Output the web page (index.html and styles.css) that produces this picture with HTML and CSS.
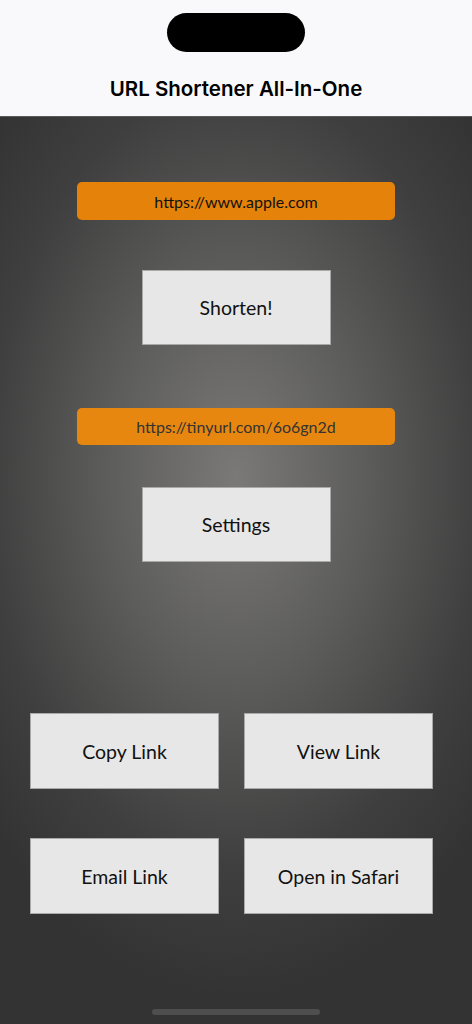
FILE: index.html
```html
<!DOCTYPE html>
<html>
<head>
<meta charset="utf-8">
<link rel="stylesheet" href="styles.css">
</head>
<body>
<div class="screen">
  <header class="header">
    <div class="island"></div>
    <h1 class="title">URL Shortener All-In-One</h1>
  </header>
  <main class="main">
    <div class="field">https://www.apple.com</div>
    <div class="btn btn-center btn-shorten">Shorten!</div>
    <div class="field field-result">https://tinyurl.com/6o6gn2d</div>
    <div class="btn btn-center btn-settings">Settings</div>
    <div class="grid">
      <div class="btn">Copy Link</div>
      <div class="btn">View Link</div>
      <div class="btn">Email Link</div>
      <div class="btn">Open in Safari</div>
    </div>
    <div class="home"></div>
  </main>
</div>
</body>
</html>
```

FILE: styles.css
```css
html, body {
  margin: 0;
  padding: 0;
}
body {
  width: 472px;
  height: 1024px;
  overflow: hidden;
  font-family: "Lato", "Noto Sans", sans-serif;
}
.screen {
  display: flex;
  flex-direction: column;
  height: 1024px;
}
.header {
  height: 117px;
  flex: none;
  background: #f9f9fb;
  border-bottom: 1px solid #5a5a5a;
  display: flex;
  flex-direction: column;
  align-items: center;
  padding-top: 13px;
  box-sizing: border-box;
}
.island {
  width: 138px;
  height: 39px;
  border-radius: 20px;
  background: #000;
}
.title {
  margin: 24px 0 0 0;
  font-family: "Inter", "Liberation Sans", sans-serif;
  font-weight: 600;
  font-size: 20.5px;
  color: #000;
}
.main {
  position: relative;
  flex: 1;
  background: radial-gradient(ellipse 330px 520px at 236px 360px, #7a7978 0%, #5c5c5b 40%, #3f3f3f 75%, #333333 100%);
  display: flex;
  flex-direction: column;
  align-items: center;
  padding-top: 65px;
}
.field {
  width: 318px;
  height: 38px;
  border-radius: 5px;
  background: #e5820a;
  display: flex;
  align-items: center;
  justify-content: center;
  font-size: 16px;
  color: #111;
}
.field-result {
  height: 37px;
  margin-top: 63px;
  background: #e8870f;
  color: #333;
}
.btn {
  height: 75px;
  background: #e7e7e7;
  border: 1px solid #a9a9a9;
  box-sizing: border-box;
  display: flex;
  align-items: center;
  justify-content: center;
  font-size: 19.5px;
  color: #111;
}
.btn-center {
  width: 189px;
}
.btn-shorten {
  margin-top: 50px;
}
.btn-settings {
  margin-top: 42px;
}
.grid {
  margin-top: 151px;
  margin-left: 30px;
  align-self: flex-start;
  width: 403px;
  display: grid;
  grid-template-columns: 189px 189px;
  column-gap: 25px;
  row-gap: 49px;
}
.grid .btn {
  height: 76px;
}
.home {
  position: absolute;
  left: 152px;
  bottom: 9px;
  width: 168px;
  height: 6px;
  border-radius: 3px;
  background: #4e4e4e;
}
```
